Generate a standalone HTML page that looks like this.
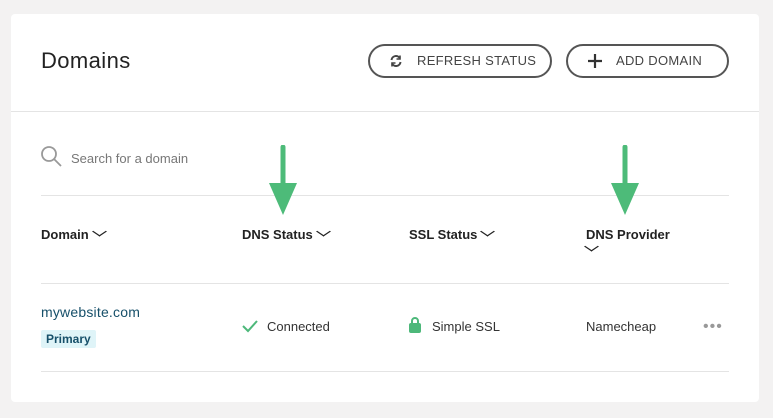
<!DOCTYPE html>
<html><head><style>
body{margin:0;width:773px;height:418px;background:#f3f2f2;font-family:"Liberation Sans",sans-serif;position:relative;overflow:hidden;color:#222}
.card{position:absolute;left:11px;top:14px;width:748px;height:388px;background:#fff;border-radius:4px}
.abs{position:absolute}
.btn{position:absolute;top:44px;height:34px;border:2px solid #555;border-radius:19px;box-sizing:border-box;font-size:13px;color:#444;letter-spacing:.3px;line-height:30px}
.hr{position:absolute;height:1px;background:#e4e4e4}
.th{position:absolute;font-size:13px;font-weight:bold;color:#222}
.td{position:absolute;font-size:13px;color:#333}
.chev{display:inline-block;width:6px;height:6px;border-right:1.8px solid #222;border-bottom:1.8px solid #222;transform:scaleX(1.5) rotate(45deg);margin-left:7px;position:relative;top:-4px}
</style></head><body>
<div class="card"></div>
<div class="abs" style="left:41px;top:48px;font-size:22px;color:#222;letter-spacing:.4px">Domains</div>
<div class="btn" style="left:368px;width:184px">
<svg class="abs" style="left:19px;top:8px" width="14" height="14" viewBox="0 0 14 14" fill="none" stroke="#444" stroke-width="2"><path d="M2.5 6A4.5 4.5 0 0 1 11 4.5"/><path d="M11.5 8A4.5 4.5 0 0 1 3 9.5"/><path d="M11 1.5v3.5h-3.5" stroke-width="1.6"/><path d="M3 12.5v-3.5h3.5" stroke-width="1.6"/></svg>
<span class="abs" style="left:47px">REFRESH STATUS</span></div>
<div class="btn" style="left:566px;width:163px">
<svg class="abs" style="left:20px;top:8px" width="14" height="14"><path d="M7 0v14M0 7h14" stroke="#333" stroke-width="2.2"/></svg>
<span class="abs" style="left:48px">ADD DOMAIN</span></div>
<div class="hr" style="left:11px;width:748px;top:111px"></div>
<svg class="abs" style="left:40px;top:145px" width="24" height="24" fill="none" stroke="#999" stroke-width="1.8"><circle cx="9" cy="9" r="7"/><path d="M14 14l7 7"/></svg>
<div class="abs" style="left:71px;top:151px;font-size:13px;color:#777">Search for a domain</div>
<div class="hr" style="left:41px;width:688px;top:195px"></div>
<div class="th" style="left:41px;top:227px">Domain<span class="chev"></span></div>
<div class="th" style="left:242px;top:227px">DNS Status<span class="chev"></span></div>
<div class="th" style="left:409px;top:227px">SSL Status<span class="chev"></span></div>
<div class="th" style="left:586px;top:227px">DNS Provider<br><span class="chev" style="margin-left:2px"></span></div>
<div class="hr" style="left:41px;width:688px;top:283px"></div>
<div class="td" style="left:41px;top:304px;color:#17506a;font-size:14px;letter-spacing:.2px">mywebsite.com</div>
<div class="abs" style="left:41px;top:330px;background:#dff4f8;color:#17506a;font-size:12px;font-weight:bold;padding:2px 5px;border-radius:2px">Primary</div>
<svg class="abs" style="left:242px;top:320px" width="16" height="13" fill="none" stroke="#4db87a" stroke-width="2"><path d="M1 6l5 5 9-10"/></svg>
<div class="td" style="left:267px;top:319px">Connected</div>
<svg class="abs" style="left:409px;top:316px" width="12" height="17"><path d="M3 8V5a3 3 0 0 1 6 0v3" fill="none" stroke="#4db87a" stroke-width="2"/><rect x="0" y="7" width="12" height="10" rx="2" fill="#4db87a"/></svg>
<div class="td" style="left:432px;top:319px">Simple SSL</div>
<div class="td" style="left:586px;top:319px">Namecheap</div>
<div class="abs" style="left:703px;top:318px;color:#999;font-size:16px;letter-spacing:1px">•••</div>
<div class="hr" style="left:41px;width:688px;top:371px"></div>
<svg class="abs" style="left:268px;top:145px" width="30" height="72"><path d="M15 2v40" stroke="#4dbb79" stroke-width="5" stroke-linecap="round"/><path d="M1 38h28L15 70z" fill="#4dbb79"/></svg>
<svg class="abs" style="left:610px;top:145px" width="30" height="72"><path d="M15 2v40" stroke="#4dbb79" stroke-width="5" stroke-linecap="round"/><path d="M1 38h28L15 70z" fill="#4dbb79"/></svg>
</body></html>
